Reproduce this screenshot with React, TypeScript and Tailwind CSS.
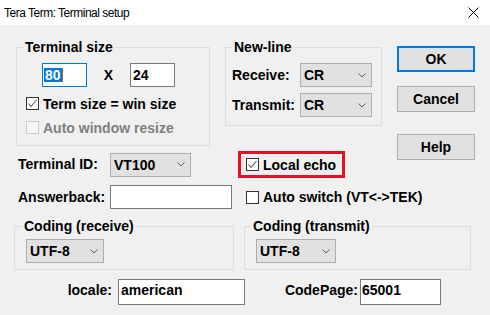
import type { ReactNode } from "react";

function CheckBox({ checked = false, disabled = false }: { checked?: boolean; disabled?: boolean }) {
  return (
    <span
      className={
        disabled
          ? "flex h-[13px] w-[13px] shrink-0 items-center justify-center border border-[#cccccc] bg-[#f7f7f7]"
          : "flex h-[13px] w-[13px] shrink-0 items-center justify-center border border-[#333333] bg-white"
      }
    >
      {checked && (
        <svg width="11" height="11" viewBox="0 0 11 11">
          <polyline points="1.5,5.5 4,8.5 9.5,2" fill="none" stroke="#555555" strokeWidth="1.1" />
        </svg>
      )}
    </span>
  );
}

function Select({ value, className }: { value: string; className: string }) {
  return (
    <div
      className={`flex h-[24px] items-center justify-between border border-[#adadad] bg-[#e1e1e1] pl-[3px] pr-[5px] ${className}`}
    >
      <span className="leading-[16px]">{value}</span>
      <svg width="8" height="5" viewBox="0 0 8 5">
        <polyline points="0.5,0.5 4,4 7.5,0.5" fill="none" stroke="#606060" strokeWidth="1" />
      </svg>
    </div>
  );
}

function Group({ label, className, legendGap, children }: { label: string; className: string; legendGap: string; children: ReactNode }) {
  return (
    <fieldset className={`border border-[#dcdcdc] ${className}`}>
      <legend className={`px-[2px] leading-[16px] ${legendGap}`}>{label}</legend>
      {children}
    </fieldset>
  );
}

function Button({ label, primary = false, className }: { label: string; primary?: boolean; className: string }) {
  return (
    <div
      className={
        primary
          ? `flex h-[26px] items-center justify-center border-2 border-[#0078d7] bg-[#e1e1e1] ${className}`
          : `flex h-[26px] items-center justify-center border border-[#adadad] bg-[#e1e1e1] ${className}`
      }
    >
      {label}
    </div>
  );
}

export default function App() {
  return (
    <div className="flex h-[315px] w-[490px] flex-col overflow-hidden bg-[#f0f0f0] font-['Liberation_Sans',sans-serif] text-[14px] font-bold text-black">
      <div className="flex h-[25px] shrink-0 items-center bg-white pl-[4px] text-[12px] font-normal tracking-[-0.5px]">
        <span>Tera Term: Terminal setup</span>
        <svg className="ml-auto mr-[11px]" width="11" height="11" viewBox="0 0 11 11">
          <path d="M0.5 0.5 L10.5 10.5 M10.5 0.5 L0.5 10.5" stroke="#000" strokeWidth="1" />
        </svg>
      </div>

      <div className="flex flex-col pl-[14px] pt-[14px]">
        <div className="ml-[2px] flex">
          <div className="flex flex-col">
            <div className="flex items-start">
              <Group label="Terminal size" legendGap="ml-[6px]" className="h-[107px] w-[194px]">
                <div className="ml-[25px] mt-[8px] flex items-center">
                  <div className="flex h-[24px] w-[45px] items-center border border-[#0078d7] bg-white pl-[1px]">
                    <span className="bg-[#0078d7] px-[1px] leading-[14px] text-white">80</span>
                    <span className="h-[14px] w-[1px] bg-[#b5651d]" />
                  </div>
                  <span className="w-[43px] text-center leading-[16px]">X</span>
                  <div className="flex h-[24px] w-[45px] items-center border border-[#7a7a7a] bg-white pl-[2px]">24</div>
                </div>
                <div className="ml-[9px] mt-[10px] flex h-[13px] items-center gap-[4px]">
                  <CheckBox checked />
                  <span className="whitespace-nowrap leading-[16px]">Term size = win size</span>
                </div>
                <div className="ml-[9px] mt-[11px] flex h-[13px] items-center gap-[4px] text-[#7f7f7f]">
                  <CheckBox disabled />
                  <span className="whitespace-nowrap leading-[16px]">Auto window resize</span>
                </div>
              </Group>

              <Group label="New-line" legendGap="ml-[6px]" className="ml-[15px] h-[87px] w-[157px]">
                <div className="mt-[8px] flex h-[24px] items-center">
                  <span className="w-[74px] pl-[6px]">Receive:</span>
                  <Select value="CR" className="w-[72px]" />
                </div>
                <div className="mt-[6px] flex h-[24px] items-center">
                  <span className="w-[74px] pl-[6px]">Transmit:</span>
                  <Select value="CR" className="w-[72px]" />
                </div>
              </Group>
            </div>

            <div className="mt-[5px] flex h-[27px] items-center">
              <span className="ml-[2px] w-[92px]">Terminal ID:</span>
              <Select value="VT100" className="w-[81px]" />
              <div className="ml-[47px] flex h-[27px] w-[107px] items-center gap-[4px] border-[3px] border-[#e81123] pl-[5px]">
                <CheckBox checked />
                <span className="whitespace-nowrap leading-[16px]">Local echo</span>
              </div>
            </div>
          </div>

          <div className="ml-[15px] flex w-[78px] flex-col">
            <Button label="OK" primary className="mt-[7px]" />
            <Button label="Cancel" className="mt-[14px]" />
            <Button label="Help" className="mt-[22px]" />
          </div>
        </div>

        <div className="mt-[7px] flex h-[24px] items-center">
          <span className="ml-[4px] w-[92px]">Answerback:</span>
          <div className="h-[24px] w-[122px] border border-[#7a7a7a] bg-white" />
          <div className="ml-[14px] flex items-center gap-[4px]">
            <CheckBox />
            <span className="whitespace-nowrap leading-[16px]">Auto switch (VT&lt;-&gt;TEK)</span>
          </div>
        </div>

        <div className="mt-[9px] flex items-start">
          <Group label="Coding (receive)" legendGap="ml-[7px]" className="h-[52px] w-[220px]">
            <Select value="UTF-8" className="ml-[11px] mt-[5px] w-[78px]" />
          </Group>
          <Group label="Coding (transmit)" legendGap="ml-[6px]" className="ml-[10px] h-[52px] w-[227px]">
            <Select value="UTF-8" className="ml-[11px] mt-[5px] w-[80px]" />
          </Group>
        </div>

        <div className="mt-[9px] flex items-start">
          <span className="w-[98px] pt-[3px] text-right leading-[16px]">locale:</span>
          <div className="ml-[6px] h-[26px] w-[127px] border border-[#7a7a7a] bg-white pl-[2px] pt-[2px] leading-[16px]">american</div>
          <span className="w-[113px] pt-[3px] text-right leading-[16px]">CodePage:</span>
          <div className="ml-[2px] h-[26px] w-[81px] border border-[#7a7a7a] bg-white pl-[1px] pt-[2px] leading-[16px]">65001</div>
        </div>
      </div>
    </div>
  );
}
